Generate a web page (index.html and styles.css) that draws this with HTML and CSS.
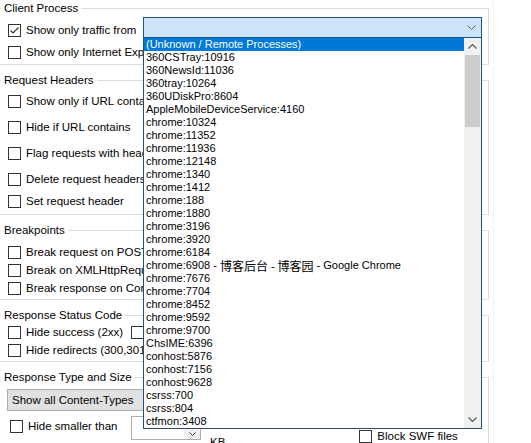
FILE: index.html
```html
<!DOCTYPE html>
<html lang="en">
  <head>
    <meta charset="UTF-8" />
    <link rel="stylesheet" href="styles.css">
    <title>Filters</title>
  </head>
  <body>
    <div class="app">
      <div class="filters">
        <!-- CLIENT PROCESS -->
        <div class="group g-client">
          <div class="group-title">Client Process</div>
          <div class="row row-proc">
            <label class="check"><span class="cb on"><svg width="11" height="11" viewBox="0 0 11 11"><polyline points="1.5,5.5 4,8 9.5,2.5" fill="none" stroke="#333" stroke-width="1.2"/></svg></span>Show only traffic from</label>
            <div class="combo">
              <svg class="chev" width="9" height="5" viewBox="0 0 9 5"><polyline points="0.5,0.5 4.5,4.5 8.5,0.5" fill="none" stroke="#606060" stroke-width="1"/></svg>
              <div class="popup">
                <div class="items">
                  <div class="item sel">(Unknown / Remote Processes)</div>
                  <div class="item">360CSTray:10916</div>
                  <div class="item">360NewsId:11036</div>
                  <div class="item">360tray:10264</div>
                  <div class="item">360UDiskPro:8604</div>
                  <div class="item">AppleMobileDeviceService:4160</div>
                  <div class="item">chrome:10324</div>
                  <div class="item">chrome:11352</div>
                  <div class="item">chrome:11936</div>
                  <div class="item">chrome:12148</div>
                  <div class="item">chrome:1340</div>
                  <div class="item">chrome:1412</div>
                  <div class="item">chrome:188</div>
                  <div class="item">chrome:1880</div>
                  <div class="item">chrome:3196</div>
                  <div class="item">chrome:3920</div>
                  <div class="item">chrome:6184</div>
                  <div class="item">chrome:6908 - <span class="cjk">博客后台 - 博客园</span> - Google Chrome</div>
                  <div class="item">chrome:7676</div>
                  <div class="item">chrome:7704</div>
                  <div class="item">chrome:8452</div>
                  <div class="item">chrome:9592</div>
                  <div class="item">chrome:9700</div>
                  <div class="item">ChsIME:6396</div>
                  <div class="item">conhost:5876</div>
                  <div class="item">conhost:7156</div>
                  <div class="item">conhost:9628</div>
                  <div class="item">csrss:700</div>
                  <div class="item">csrss:804</div>
                  <div class="item">ctfmon:3408</div>
                </div>
                <div class="vscroll">
                  <div class="sb-btn"><svg width="9" height="5" viewBox="0 0 9 5"><polyline points="0.5,4.5 4.5,0.5 8.5,4.5" fill="none" stroke="#606060" stroke-width="1.3"/></svg></div>
                  <div class="sb-track"><div class="sb-thumb"></div></div>
                  <div class="sb-btn"><svg width="9" height="5" viewBox="0 0 9 5"><polyline points="0.5,0.5 4.5,4.5 8.5,0.5" fill="none" stroke="#606060" stroke-width="1.3"/></svg></div>
                </div>
              </div>
            </div>
          </div>
          <div class="row row-ie">
            <label class="check"><span class="cb"></span>Show only Internet Explorer traffic</label>
          </div>
        </div>

        <!-- REQUEST HEADERS -->
        <div class="group g-headers">
          <div class="group-title">Request Headers</div>
          <div class="row first"><label class="check"><span class="cb"></span>Show only if URL contains</label></div>
          <div class="row"><label class="check"><span class="cb"></span>Hide if URL contains</label></div>
          <div class="row"><label class="check"><span class="cb"></span>Flag requests with headers</label></div>
          <div class="row"><label class="check"><span class="cb"></span>Delete request headers</label></div>
          <div class="row tight"><label class="check"><span class="cb"></span>Set request header</label></div>
        </div>

        <!-- BREAKPOINTS -->
        <div class="group g-break">
          <div class="group-title">Breakpoints</div>
          <div class="row first"><label class="check"><span class="cb"></span>Break request on POST</label></div>
          <div class="row"><label class="check"><span class="cb"></span>Break on XMLHttpRequest</label></div>
          <div class="row"><label class="check"><span class="cb"></span>Break response on Content-Type</label></div>
        </div>

        <!-- RESPONSE STATUS CODE -->
        <div class="group g-status">
          <div class="group-title">Response Status Code</div>
          <div class="row first">
            <label class="check"><span class="cb"></span>Hide success (2xx)</label>
            <label class="check pair"><span class="cb"></span>Hide non-2xx</label>
          </div>
          <div class="row"><label class="check"><span class="cb"></span>Hide redirects (300,301,302,303,307)</label></div>
        </div>

        <!-- RESPONSE TYPE AND SIZE -->
        <div class="group g-type">
          <div class="group-title">Response Type and Size</div>
          <div class="select">Show all Content-Types</div>
          <div class="row row-size">
            <label class="check nudge"><span class="cb"></span>Hide smaller than</label>
            <div class="spin">
              <div class="spin-btns">
                <div class="spin-btn"><svg width="7" height="4" viewBox="0 0 7 4"><polyline points="0.5,3.5 3.5,0.5 6.5,3.5" fill="none" stroke="#333" stroke-width="1"/></svg></div>
                <div class="spin-btn"><svg width="7" height="4" viewBox="0 0 7 4"><polyline points="0.5,0.5 3.5,3.5 6.5,0.5" fill="none" stroke="#333" stroke-width="1"/></svg></div>
              </div>
            </div>
            <span class="unit">KB</span>
            <label class="check swf"><span class="cb"></span>Block SWF files</label>
          </div>
          <div class="row"><label class="check"><span class="cb"></span>Hide larger than</label></div>
        </div>
      </div>
      <div class="side"></div>
    </div>
  </body>
</html>
```

FILE: styles.css
```css
* {
  margin: 0;
  padding: 0;
  box-sizing: border-box;
}

body {
  font-family: "Liberation Sans", Arial, sans-serif;
  font-size: 11.5px;
  color: #000;
  background-color: #fff;
}

/* LAYOUT */
.app {
  display: flex;
  width: 531px;
  height: 443px;
  overflow: hidden;
}

.filters {
  width: 493px;
  flex: none;
  padding-top: 8px;
}

.side {
  flex: 1;
  border-left: 1px solid #f3f3f3;
}

/* GROUP BOXES */
.group {
  border: 1px solid #dcdcdc;
  margin: 0 0 15px -4px;
  width: 493px;
  padding: 0 6px 0 11px;
}

.g-client { height: 57px; }
.g-headers { height: 135px; }
.g-break { height: 70px; }
.g-status { height: 47px; }
.g-type { height: 120px; }

.group-title {
  width: fit-content;
  margin: -8px 0 0 -7px;
  padding: 0 3px;
  line-height: 14px;
  background-color: #fff;
}

/* ROWS AND CHECKBOXES */
.row {
  display: flex;
  align-items: center;
  margin-top: 4px;
}

.g-headers .row { margin-top: 12px; }
.g-headers .row.first { margin-top: 7px; }
.g-headers .row.tight { margin-top: 8px; }
.g-break .row.first { margin-top: 8px; }
.g-status .row.first { margin-top: 3px; }

.check {
  display: flex;
  align-items: center;
  gap: 5px;
  height: 14px;
  white-space: nowrap;
}

.cb {
  width: 13px;
  height: 13px;
  flex: none;
  border: 1px solid #333;
  background-color: #fff;
}

.cb svg {
  display: block;
}

.pair {
  margin-left: 8px;
}

/* PROCESS COMBO + DROPDOWN */
.row-proc {
  align-items: flex-start;
  margin-top: 2px;
}

.row-proc .check {
  margin-top: 6px;
}

.row-ie {
  margin-top: 7px;
}

.combo {
  position: relative;
  margin-left: auto;
  width: 339px;
  height: 21px;
  border: 1px solid #1c5584;
  background-color: #cce4f7;
}

.chev {
  position: absolute;
  right: 5px;
  top: 7px;
}

.popup {
  position: absolute;
  z-index: 10;
  top: 20px;
  left: -1px;
  width: 339px;
  height: 391px;
  display: flex;
  border: 1px solid #25506f;
  border-top: none;
  background-color: #fff;
}

.items {
  flex: 1;
  overflow: hidden;
  font-size: 11px;
}

.item {
  height: 13px;
  line-height: 13px;
  padding-left: 2px;
  white-space: nowrap;
}

.item.sel {
  background-color: #0078d7;
  color: #fff;
}

.cjk {
  font-family: "Noto Sans CJK SC", sans-serif;
  font-size: 12px;
  line-height: 13px;
  vertical-align: top;
}

.vscroll {
  width: 17px;
  display: flex;
  flex-direction: column;
  background-color: #f0f0f0;
}

.sb-btn {
  height: 17px;
  display: flex;
  align-items: center;
  justify-content: center;
}

.sb-track {
  flex: 1;
  padding: 0 1px;
}

.sb-thumb {
  height: 72px;
  background-color: #cdcdcd;
}

/* RESPONSE TYPE AND SIZE */
.select {
  margin: 5px 0 0 -1px;
  width: 300px;
  height: 22px;
  line-height: 20px;
  padding-left: 4px;
  border: 1px solid #adadad;
  background-color: #e1e1e1;
}

.row-size {
  align-items: flex-start;
  margin-top: 8px;
}

.nudge {
  width: 121px;
  margin-left: 2px;
}

.spin {
  width: 70px;
  height: 24px;
  margin-top: -3px;
  display: flex;
  justify-content: flex-end;
  border: 1px solid #adadad;
  background-color: #fff;
}

.spin-btns {
  width: 16px;
  display: flex;
  flex-direction: column;
}

.spin-btn {
  flex: 1;
  display: flex;
  align-items: center;
  justify-content: center;
  background-color: #f0f0f0;
}

.unit {
  margin: 17px 0 0 9px;
}

.swf {
  margin: 10px 0 0 134px;
}
```
